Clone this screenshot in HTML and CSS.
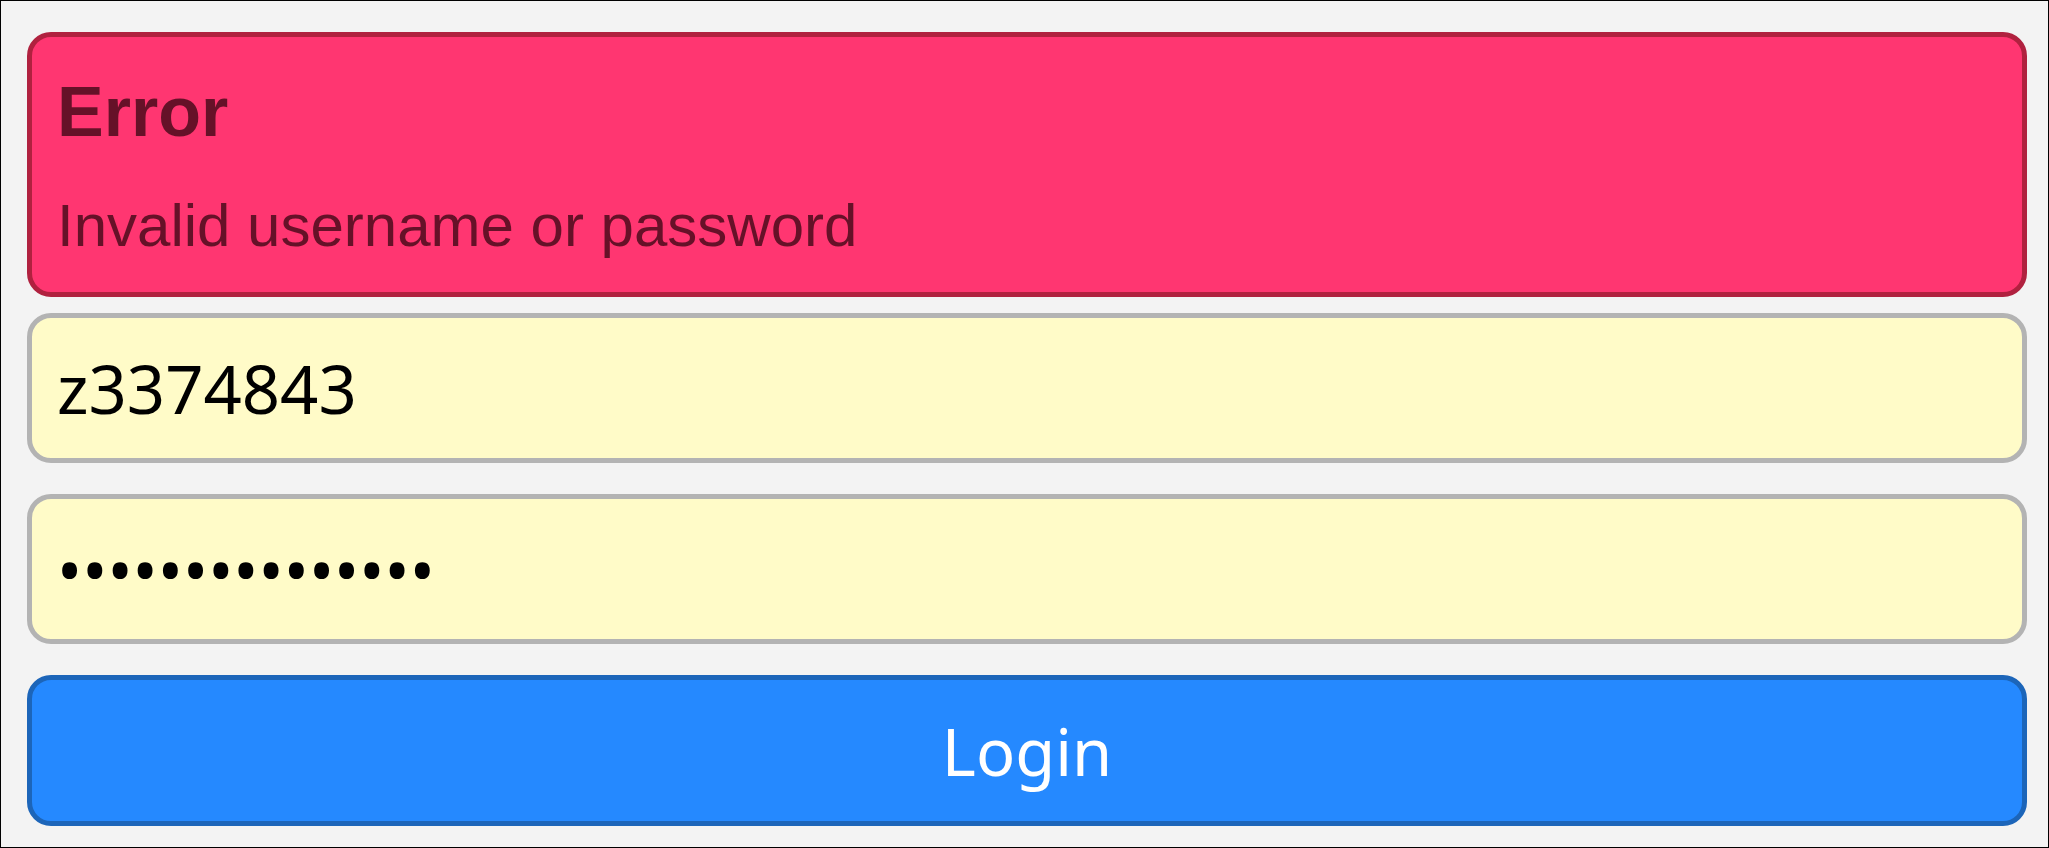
FILE: index.html
```html
<!DOCTYPE html>
<html lang="en">
<head>
<meta charset="utf-8">
<title>Login</title>
<link rel="stylesheet" href="styles.css">
</head>
<body>
<div class="page">
  <div class="alert">
    <h4 class="alert-title">Error</h4>
    <p class="alert-message">Invalid username or password</p>
  </div>
  <form class="login-form">
    <input class="field" type="text" value="z3374843">
    <input class="field" type="password" value="passwordpasswo1">
    <button class="login-btn" type="button">Login</button>
  </form>
</div>
</body>
</html>
```

FILE: styles.css
```css
html, body {
  height: 100%;
}
body {
  margin: 0;
  box-sizing: border-box;
  border: 1px solid #000;
  background: #f3f3f3;
  font-family: "Liberation Sans", Arial, sans-serif;
}
.page {
  padding: 31px 0 0 26px;
  width: 2000px;
}
.alert {
  box-sizing: border-box;
  height: 265px;
  margin-bottom: 16px;
  padding: 35px 25px 31px;
  background: #ff3671;
  border: 5px solid #b0213f;
  border-radius: 24px;
  color: #661128;
}
.alert-title {
  margin: 0;
  font-size: 70px;
  line-height: 80px;
  font-weight: bold;
}
.alert-message {
  margin: 39px 0 0;
  font-size: 60px;
  line-height: 70px;
}
.login-form {
  display: flex;
  flex-direction: column;
  gap: 31px;
  margin: 0;
}
.field {
  box-sizing: border-box;
  width: 2000px;
  height: 150px;
  margin: 0;
  padding: 0 25px;
  background: #fffbc8;
  border: 5px solid #b3b3b3;
  border-radius: 24px;
  font-family: "Noto Sans", sans-serif;
  font-size: 67px;
  color: #000;
  outline: none;
}
.login-btn {
  box-sizing: border-box;
  width: 2000px;
  height: 151px;
  margin: 0;
  padding: 0;
  background: #2589ff;
  border: 5px solid #1c65b9;
  border-radius: 24px;
  font-family: "Noto Sans", sans-serif;
  font-size: 65px;
  color: #fff;
}
```
